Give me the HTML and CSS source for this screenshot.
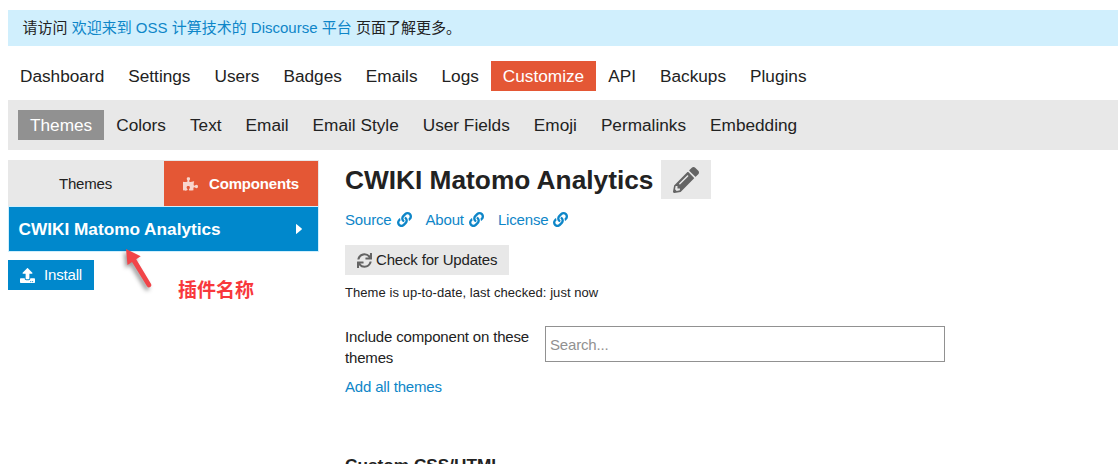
FILE: index.html
```
<!DOCTYPE html>
<html lang="zh-CN">
<head>
  <meta charset="UTF-8">
  <meta name="viewport" content="width=device-width, initial-scale=1.0">
  <title>CWIKI Matomo Analytics</title>
  <link rel="stylesheet" href="styles.css">
</head>
<body>
  <!-- shared icons -->
  <svg class="hidden">
    <symbol id="link" viewBox="0 0 512 512"><path d="M326.612 185.391c59.747 59.809 58.927 155.698.36 214.59-.11.12-.24.25-.36.37l-67.2 67.2c-59.27 59.27-155.699 59.262-214.96 0-59.27-59.26-59.27-155.7 0-214.96l37.106-37.106c9.84-9.84 26.786-3.3 27.294 10.606.648 17.722 3.826 35.527 9.69 52.721 1.986 5.822.567 12.262-3.783 16.612l-13.087 13.087c-28.026 28.026-28.905 73.66-1.155 101.96 28.024 28.579 74.086 28.749 102.325.51l67.2-67.19c28.191-28.191 28.073-73.757 0-101.83-3.701-3.694-7.429-6.564-10.341-8.569a16.037 16.037 0 0 1-6.947-12.606c-.396-10.567 3.348-21.456 11.698-29.806l21.054-21.055c5.521-5.521 14.182-6.199 20.584-1.731a152.482 152.482 0 0 1 20.522 17.197zM467.547 44.449c-59.261-59.262-155.69-59.27-214.96 0l-67.2 67.2c-.12.12-.25.25-.36.37-58.566 58.892-59.387 154.781.36 214.59a152.454 152.454 0 0 0 20.521 17.196c6.402 4.468 15.064 3.789 20.584-1.731l21.054-21.055c8.35-8.35 12.094-19.239 11.698-29.806a16.037 16.037 0 0 0-6.947-12.606c-2.912-2.005-6.64-4.875-10.341-8.569-28.073-28.073-28.191-73.639 0-101.83l67.2-67.19c28.239-28.239 74.3-28.069 102.325.51 27.75 28.3 26.872 73.934-1.155 101.96l-13.087 13.087c-4.35 4.35-5.769 10.79-3.783 16.612 5.864 17.194 9.042 34.999 9.69 52.721.509 13.906 17.454 20.446 27.294 10.606l37.106-37.106c59.271-59.259 59.271-155.699.001-214.959z"/></symbol>
  </svg>

  <div class="notice">请访问 <a href="#">欢迎来到 OSS 计算技术的 Discourse 平台</a> 页面了解更多。</div>

  <nav class="nav">
    <a href="#">Dashboard</a>
    <a href="#">Settings</a>
    <a href="#">Users</a>
    <a href="#">Badges</a>
    <a href="#">Emails</a>
    <a href="#">Logs</a>
    <a href="#" class="active">Customize</a>
    <a href="#">API</a>
    <a href="#">Backups</a>
    <a href="#">Plugins</a>
  </nav>

  <nav class="nav subnav">
    <a href="#" class="active">Themes</a>
    <a href="#">Colors</a>
    <a href="#">Text</a>
    <a href="#">Email</a>
    <a href="#">Email Style</a>
    <a href="#">User Fields</a>
    <a href="#">Emoji</a>
    <a href="#">Permalinks</a>
    <a href="#">Embedding</a>
  </nav>

  <div class="content">
    <aside class="sidebar">
      <div class="tabs">
        <a href="#" class="tab">Themes</a>
        <a href="#" class="tab active">
          <svg class="icon" viewBox="0 0 576 512"><path d="M519.442 288.651c-41.519 0-59.5 31.593-82.058 31.593C377.409 320.244 432 144 432 144s-196.288 80-196.288-3.297c0-35.827 36.288-46.25 36.288-85.985C272 19.216 243.885 0 210.539 0c-34.654 0-66.366 18.891-66.366 56.346 0 41.364 31.711 59.277 31.711 81.75C175.885 207.719 0 166.758 0 166.758v333.237s178.635 41.047 178.635-28.662c0-22.473-40-40.107-40-81.471 0-37.456 29.25-56.346 63.577-56.346 33.673 0 61.788 19.216 61.788 54.717 0 39.735-36.288 50.158-36.288 85.985 0 60.803 129.675 25.73 181.23 25.73 0 0-34.725-120.101 25.827-120.101 35.962 0 46.423 36.152 86.308 36.152C556.712 416 576 387.99 576 354.443c0-34.199-18.962-65.792-56.558-65.792z"/></svg>
          Components
        </a>
      </div>
      <a href="#" class="theme-item">
        CWIKI Matomo Analytics
        <svg class="caret" viewBox="0 0 6 10"><path d="M0 .5v9q0 .8.6.2L5.7 5.4q.4-.4 0-.8L.6.3Q0-.3 0 .5z"/></svg>
      </a>
      <button class="btn btn-primary">
        <svg class="icon" viewBox="0 0 512 512"><path d="M296 384h-80c-13.3 0-24-10.7-24-24V192h-87.7c-17.8 0-26.7-21.5-14.1-34.1L242.3 5.7c7.5-7.5 19.8-7.5 27.3 0l152.2 152.2c12.6 12.6 3.7 34.1-14.1 34.1H320v168c0 13.3-10.7 24-24 24zm216-8v112c0 13.3-10.7 24-24 24H24c-13.3 0-24-10.7-24-24V376c0-13.3 10.7-24 24-24h136v8c0 30.9 25.1 56 56 56h80c30.9 0 56-25.1 56-56v-8h136c13.3 0 24 10.7 24 24zm-124 88c0-11-9-20-20-20s-20 9-20 20 9 20 20 20 20-9 20-20zm64 0c0-11-9-20-20-20s-20 9-20 20 9 20 20 20 20-9 20-20z"/></svg>
        Install
      </button>
      <svg class="arrow" width="36" height="48" viewBox="0 0 36 48"><path d="M6 4l1.500 16 4.500-3L27 41.300q1.500 1.900 3.200.8t.9-3.200L16.200 14.200l4.500-3z"/></svg>
      <span class="note">插件名称</span>
    </aside>

    <main class="main">
      <div class="title">
        <h1>CWIKI Matomo Analytics</h1>
        <button class="btn edit">
          <svg class="icon" viewBox="0 0 512 512"><path d="M497.900 142.100l-46.100 46.100c-4.700 4.700-12.300 4.700-17 0l-111-111c-4.700-4.700-4.700-12.300 0-17l46.100-46.100c18.700-18.700 49.100-18.700 67.900 0l60.100 60.100c18.800 18.700 18.800 49.100 0 67.900zM284.200 99.800L21.600 362.400.4 483.900c-2.900 16.400 11.400 30.600 27.800 27.800l121.500-21.300 262.600-262.600c4.700-4.700 4.700-12.300 0-17l-111-111c-4.800-4.700-12.400-4.700-17.100 0zM124.100 339.900c-5.500-5.500-5.500-14.300 0-19.800l154-154c5.500-5.500 14.300-5.500 19.800 0s5.500 14.300 0 19.800l-154 154c-5.500 5.500-14.300 5.500-19.800 0zM88 424h48v36.300l-64.500 11.300-31.100-31.100L51.700 376H88v48z"/></svg>
        </button>
      </div>
      <div class="links">
        <a href="#">Source <svg class="icon"><use href="#link"/></svg></a>
        <a href="#">About <svg class="icon"><use href="#link"/></svg></a>
        <a href="#">License <svg class="icon"><use href="#link"/></svg></a>
      </div>
      <button class="btn check">
        <svg class="icon" viewBox="0 0 512 512"><path d="M440.650 12.570l4 82.770A247.160 247.160 0 0 0 255.830 8C134.730 8 33.910 94.920 12.290 209.820A12 12 0 0 0 24.090 224h49.050a12 12 0 0 0 11.670-9.260 175.910 175.910 0 0 1 317-56.940l-101.460-4.860a12 12 0 0 0-12.570 12v47.410a12 12 0 0 0 12 12H500a12 12 0 0 0 12-12V12a12 12 0 0 0-12-12h-47.370a12 12 0 0 0-11.980 12.570zM255.830 432a175.610 175.610 0 0 1-146-77.800l101.800 4.870a12 12 0 0 0 12.570-12v-47.400a12 12 0 0 0-12-12H12a12 12 0 0 0-12 12V500a12 12 0 0 0 12 12h47.350a12 12 0 0 0 12-12.600l-4.150-82.570A247.170 247.170 0 0 0 255.830 504c121.110 0 221.930-86.920 243.550-201.820a12 12 0 0 0-11.800-14.180h-49.050a12 12 0 0 0-11.670 9.260A175.860 175.860 0 0 1 255.830 432z"/></svg>
        Check for Updates
      </button>
      <p class="status">Theme is up-to-date, last checked: just now</p>
      <div class="setting">
        <label for="themes">Include component on these themes</label>
        <input type="text" id="themes" placeholder="Search...">
      </div>
      <a href="#" class="add-all">Add all themes</a>
      <h2>Custom CSS/HTML</h2>
    </main>
  </div>
</body>
</html>
```
FILE: styles.css
```
* { box-sizing: border-box; }
html, body { height: 100%; overflow: hidden; }
body { margin: 0; padding: 10px 1px 0 8px; background: #fff; color: #222; font: 15px/21px "Liberation Sans", "Noto Sans CJK SC", sans-serif; }
a { color: #0e86c8; text-decoration: none; }
h1, h2, p { margin: 0; }
.hidden { display: none; }
.icon { width: 15px; height: 15px; fill: currentColor; flex: none; }

.notice { height: 36px; padding: 0 14.5px; line-height: 36px; background: #d0effd; }

.nav { display: flex; align-items: center; height: 30px; margin-top: 15px; font-size: 17.23px; }
.nav a { padding: 0 12px; line-height: 30px; color: #222; }
.nav .active { background: #e45735; color: #fff; }
.subnav { height: 50px; margin-top: 9px; padding-left: 10px; background: #e8e8e8; }
.subnav .active { background: #919191; }

.content { display: flex; gap: 26px; padding-top: 10px; letter-spacing: -0.17px; }
.sidebar { position: relative; width: 311px; flex: none; }
.tabs { display: flex; height: 46px; background: #e8e8e8; }
.tab { width: 155px; padding-top: 1px; line-height: 46px; text-align: center; color: #222; }
.tab.active { display: flex; align-items: center; width: 154px; margin: 1px 0 0 1px; padding: 0 0 0 19px; gap: 11px; background: #e45735; color: #fff; font-weight: bold; }
.tab .icon { width: 15px; height: 14px; opacity: .75; }
.theme-item { display: flex; justify-content: space-between; align-items: center; height: 46px; padding: 0 16px 0 9.5px; background: #0088cc; border: 1px solid #d0effd; color: #fff; font-size: 17.23px; font-weight: bold; letter-spacing: 0; }
.caret { width: 6px; height: 10px; fill: #fff; }

.btn { display: flex; align-items: center; height: 30px; padding: 0 12px 2px; border: none; background: #e8e8e8; color: #222; font: inherit; letter-spacing: inherit; }
.btn .icon { position: relative; top: 1px; fill: #646464; }
.btn-primary { gap: 9px; margin-top: 8px; background: #0088cc; color: #fff; }
.btn-primary .icon { fill: #fff; }

/* callout over the list */
.arrow { position: absolute; left: 112px; top: 85px; fill: #f14549; filter: drop-shadow(-2px 3px 2px rgba(0,0,0,0.4)); }
.note { position: absolute; left: 170px; top: 115px; color: #f8383c; font: bold 19px/27px "Noto Sans CJK SC", sans-serif; letter-spacing: 0; }

.title { display: flex; align-items: center; gap: 8px; letter-spacing: 0; }
h1 { padding-top: 2px; font-size: 26.27px; line-height: 37px; }
.edit { width: 50px; height: 39px; padding-bottom: 0; }
.edit .icon { top: 0; width: 26px; height: 26px; }
.links { display: flex; gap: 14px; margin-top: 10px; }
.links a { display: flex; align-items: center; gap: 5px; }
.check { gap: 4px; margin-top: 15px; }
.status { margin-top: 7px; font-size: 13px; letter-spacing: 0.06px; }
.setting { display: flex; align-items: flex-start; margin-top: 23px; }
.setting label { width: 200px; padding-right: 10px; }
.setting input { width: 400px; height: 36px; padding: 0 4px; border: 1px solid #919191; font: inherit; letter-spacing: inherit; }
.setting input::placeholder { color: #919191; }
.add-all { display: block; margin-top: 8px; }
h2 { margin-top: 56px; font-size: 17.23px; line-height: 24px; letter-spacing: 0; }
```
